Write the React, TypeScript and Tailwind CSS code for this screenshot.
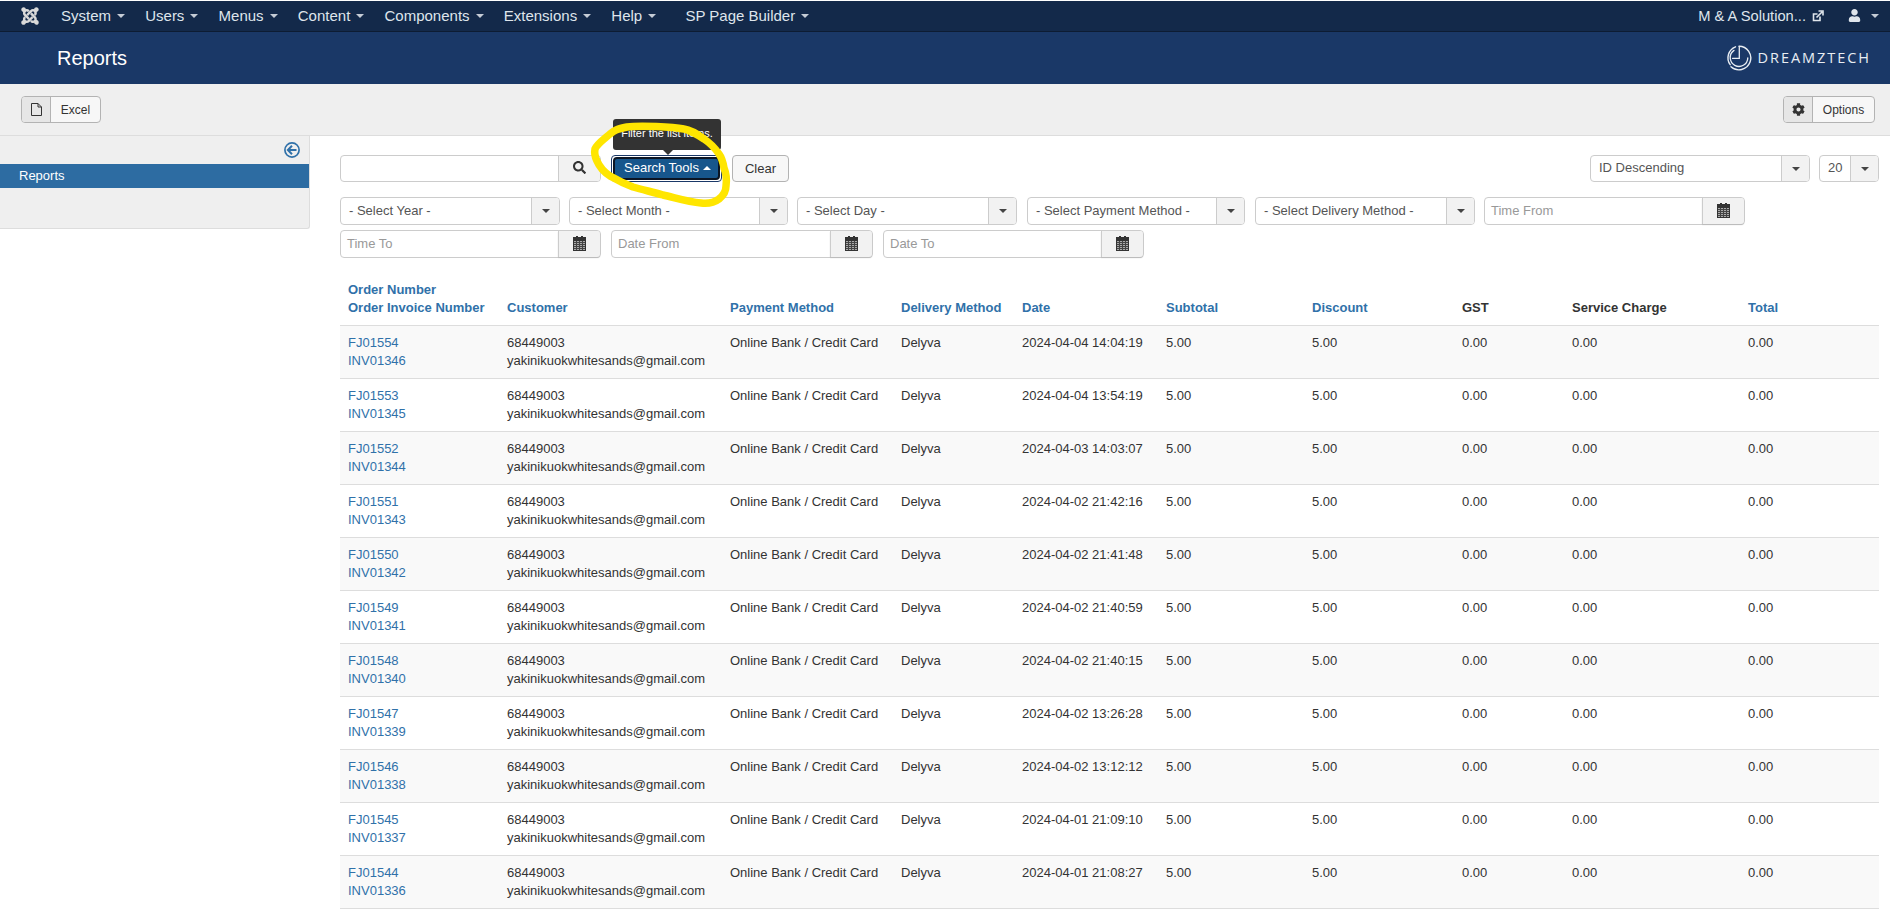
import React from "react";
import { FaJoomla, FaSearch, FaCog, FaUser } from "react-icons/fa";

const Caret = ({ up = false, className = "" }: { up?: boolean; className?: string }) => (
  <span
    className={
      (up
        ? "border-x-[4px] border-b-[4px] border-x-transparent border-b-current "
        : "border-x-[4px] border-t-[4px] border-x-transparent border-t-current ") +
      "inline-block h-0 w-0 " +
      className
    }
  />
);

const Calendar = () => (
  <svg width="13" height="15" viewBox="0 0 13 15" className="mb-[2px] mr-[1px]">
    <rect x="0" y="1" width="13" height="14" fill="#333" />
    <rect x="3" y="0" width="2" height="2" fill="#333" />
    <rect x="8" y="0" width="2" height="2" fill="#333" />
    <rect x="1" y="5" width="11" height="9" fill="#aaa" />
    {[6, 8, 10, 12].map((y) => (
      <rect key={y} x="1" y={y} width="11" height="1" fill="#444" />
    ))}
    {[3, 6, 9].map((x) => (
      <rect key={x} x={x} y="5" width="1" height="9" fill="#444" />
    ))}
  </svg>
);

const Select = ({ label, w, top = false }: { label: string; w: string; top?: boolean }) => (
  <div
    className={
      (top ? "h-[27px] " : "h-[28px] ") + "flex shrink-0 rounded-[4px] border border-[#ccc] bg-white text-[#555] " + w
    }
  >
    <div className={(top ? "leading-[24px] " : "leading-[26px] ") + "flex-1 truncate pl-[8px]"}>{label}</div>
    <div className="flex w-[28px] items-center justify-center rounded-r-[3px] border-l border-[#ccc] bg-[#f2f2f2]">
      <Caret className="text-[#444]" />
    </div>
  </div>
);

const DateInput = ({ label, w }: { label: string; w: string }) => (
  <div className={"flex h-[28px] shrink-0 rounded-[4px] border border-[#ccc] bg-white " + w}>
    <div className="flex-1 pl-[6px] leading-[26px] text-[#999]">{label}</div>
    <div className="flex w-[42px] items-center justify-center rounded-r-[3px] border-l border-[#ccc] bg-[#f2f2f2] shadow-[0_1px_1px_#bbb]">
      <Calendar />
    </div>
  </div>
);

const navItems = ["System", "Users", "Menus", "Content", "Components", "Extensions", "Help"];

const rows = [
  ["FJ01554", "INV01346", "2024-04-04 14:04:19"],
  ["FJ01553", "INV01345", "2024-04-04 13:54:19"],
  ["FJ01552", "INV01344", "2024-04-03 14:03:07"],
  ["FJ01551", "INV01343", "2024-04-02 21:42:16"],
  ["FJ01550", "INV01342", "2024-04-02 21:41:48"],
  ["FJ01549", "INV01341", "2024-04-02 21:40:59"],
  ["FJ01548", "INV01340", "2024-04-02 21:40:15"],
  ["FJ01547", "INV01339", "2024-04-02 13:26:28"],
  ["FJ01546", "INV01338", "2024-04-02 13:12:12"],
  ["FJ01545", "INV01337", "2024-04-01 21:09:10"],
  ["FJ01544", "INV01336", "2024-04-01 21:08:27"],
];

const th = "px-[8px] py-[8px] text-left align-bottom font-bold leading-[18px]";
const td = "px-[8px] py-[8px] align-top leading-[18px]";

export default function App() {
  return (
    <div className="relative h-[918px] w-full overflow-hidden bg-white pt-px font-['Liberation_Sans',Arial,sans-serif] text-[13px] text-[#333]">
      {/* Top navigation */}
      <div className="flex h-[31px] items-center border-b border-[#0d1c33] bg-[#13294a] text-[15px] text-[#dfe5ec]">
        <FaJoomla className="ml-[20px] mr-[21px] text-[20px] text-[#d9d9d9]" />
        <div className="flex items-center gap-[20.2px]">
          {navItems.map((n) => (
            <div key={n} className="flex items-center gap-[6px]">
              <span>{n}</span>
              <Caret className="text-[#c5ccd6]" />
            </div>
          ))}
          <div className="ml-[9px] flex items-center gap-[6px]">
            <span>SP Page Builder</span>
            <Caret className="text-[#c5ccd6]" />
          </div>
        </div>
        <div className="ml-auto flex items-center pr-[11px]">
          <span className="text-[14.7px]">M &amp; A Solution...</span>
          <svg width="12" height="12" viewBox="0 0 12 12" className="ml-[6px]" fill="none" stroke="#dfe5ec">
            <path d="M8 6.5V10.5H1.5V4H5.5" strokeWidth="1.6" />
            <path d="M4.5 7.5L10 2M6.5 1H11V5.5" strokeWidth="1.6" />
          </svg>
          <FaUser className="ml-[24px] text-[13px] text-[#dfe5ec]" />
          <Caret className="ml-[10px] text-[#c5ccd6]" />
        </div>
      </div>

      {/* Header */}
      <div className="flex h-[52px] items-center bg-[#1a3867] pl-[57px] pr-[19px] text-white">
        <h1 className="text-[20px] font-normal">Reports</h1>
        <div className="ml-auto flex items-center">
          <svg width="26" height="26" viewBox="0 0 26 26" fill="none" stroke="#e8edf3" strokeLinecap="round">
            <path d="M13 1.2A11.8 11.8 0 1 1 5 21.7" strokeWidth="1.4" />
            <path d="M4.2 19.7A11.8 11.8 0 0 1 9.5 1.8" strokeWidth="1.4" />
            <path d="M8 5.4A8.8 8.8 0 1 0 21.8 13" strokeWidth="1.3" />
            <path d="M13.3 1.5V13.3H6.5" strokeWidth="1.3" />
          </svg>
          <span className="ml-[6px] font-['Open_Sans',sans-serif] text-[14.5px] leading-none tracking-[1.95px] text-[#e8edf3]">
            DREAMZTECH
          </span>
        </div>
      </div>

      {/* Toolbar */}
      <div className="flex h-[52px] items-center justify-between border-b border-[#ddd] bg-[#efefef] pl-[21px] pr-[15px]">
        <div className="flex h-[27px] w-[80px] overflow-hidden rounded-[4px] border border-[#b3b3b3] bg-[#f7f7f7]">
          <div className="flex w-[29px] items-center justify-center border-r border-[#b3b3b3] bg-[#e6e6e6]">
            <svg width="11" height="13" viewBox="0 0 11 13" fill="none" stroke="#333">
              <path d="M0.5 0.5H7L10.5 4V12.5H0.5ZM7 0.5V4H10.5" strokeWidth="1" />
            </svg>
          </div>
          <div className="flex flex-1 items-center justify-center text-[12px]">Excel</div>
        </div>
        <div className="flex h-[27px] w-[92px] overflow-hidden rounded-[4px] border border-[#b3b3b3] bg-[#f7f7f7]">
          <div className="flex w-[29px] items-center justify-center border-r border-[#b3b3b3] bg-[#e6e6e6]">
            <FaCog className="text-[13px] text-[#333]" />
          </div>
          <div className="flex flex-1 items-center justify-center text-[12px]">Options</div>
        </div>
      </div>

      <div className="flex">
        {/* Sidebar */}
        <div className="h-[93px] w-[310px] shrink-0 rounded-br-[3px] border-b border-r border-[#ddd] bg-[#efefef]">
          <div className="flex h-[28px] items-center justify-end pr-[9px]">
            <svg width="16" height="16" viewBox="0 0 16 16" fill="none" stroke="#3071a9">
              <circle cx="8" cy="8" r="7.1" strokeWidth="1.7" />
              <path d="M8 3.8L3.9 8L8 12.2M4.2 8H12.5" strokeWidth="2" />
            </svg>
          </div>
          <div className="h-[24px] bg-[#2d6ca2] pl-[19px] text-[13px] leading-[24px] text-white">Reports</div>
        </div>

        {/* Content */}
        <div className="min-w-0 flex-1 pl-[30px] pr-[11px] pt-[19px]">
          <div className="flex h-[27px] items-stretch">
            <div className="flex w-[261px] rounded-[4px] border border-[#ccc] bg-white">
              <div className="flex-1" />
              <div className="flex w-[42px] items-center justify-center rounded-r-[3px] border-l border-[#ccc] bg-[#f2f2f2]">
                <FaSearch className="mb-[2px] text-[13px] text-[#333]" />
              </div>
            </div>
            <div className="relative ml-[10px] w-[111px] rounded-[4px] border border-[#1a3867] bg-white p-px">
              <div className="flex h-full items-center justify-center gap-[4px] rounded-[4px] border-2 border-[#0b1524] bg-[#17568c] pb-[1px] pl-[2px] text-white">
                <span>Search Tools</span>
                <Caret up />
              </div>
              <div className="absolute left-[1px] top-[-37px] flex h-[31px] w-[108px] justify-center rounded-[3px] bg-[#333] pt-[7px] text-[11px] leading-[14px] text-white">
                Filter the list items.
              </div>
              <span className="absolute left-[51px] top-[-6px] h-0 w-0 border-x-[5px] border-t-[5px] border-x-transparent border-t-[#333]" />
            </div>
            <div className="ml-[10px] flex w-[57px] items-center justify-center rounded-[4px] border border-[#b3b3b3] bg-[#f7f7f7] text-[#333]">
              Clear
            </div>
            <div className="ml-auto flex gap-[9px]">
              <Select top label="ID Descending" w="w-[220px]" />
              <Select top label="20" w="w-[60px]" />
            </div>
          </div>

          <div className="mt-[15px] flex">
            <Select label="- Select Year -" w="w-[220px]" />
            <Select label="- Select Month -" w="ml-[9px] w-[219px]" />
            <Select label="- Select Day -" w="ml-[9px] w-[220px]" />
            <Select label="- Select Payment Method -" w="ml-[10px] w-[218px]" />
            <Select label="- Select Delivery Method -" w="ml-[10px] w-[220px]" />
            <DateInput label="Time From" w="ml-[9px] w-[261px]" />
          </div>
          <div className="mt-[5px] flex">
            <DateInput label="Time To" w="w-[261px]" />
            <DateInput label="Date From" w="ml-[10px] w-[262px]" />
            <DateInput label="Date To" w="ml-[10px] w-[261px]" />
          </div>

          <table className="mt-[15px] w-[1539px] table-fixed border-collapse">
            <colgroup>
              <col className="w-[159px]" />
              <col className="w-[223px]" />
              <col className="w-[171px]" />
              <col className="w-[121px]" />
              <col className="w-[144px]" />
              <col className="w-[146px]" />
              <col className="w-[150px]" />
              <col className="w-[110px]" />
              <col className="w-[176px]" />
              <col className="w-[139px]" />
            </colgroup>
            <thead>
              <tr className="text-[#3071a9]">
                <th className={th}>
                  Order Number
                  <br />
                  Order Invoice Number
                </th>
                <th className={th}>Customer</th>
                <th className={th}>Payment Method</th>
                <th className={th}>Delivery Method</th>
                <th className={th}>Date</th>
                <th className={th}>Subtotal</th>
                <th className={th}>Discount</th>
                <th className={th + " text-[#333]"}>GST</th>
                <th className={th + " text-[#333]"}>Service Charge</th>
                <th className={th}>Total</th>
              </tr>
            </thead>
            <tbody>
              {rows.map((r, i) => (
                <tr key={r[0]} className={"border-y border-[#ddd] " + (i % 2 === 0 ? "bg-[#f9f9f9]" : "bg-white")}>
                  <td className={td + " text-[#3071a9]"}>
                    {r[0]}
                    <br />
                    {r[1]}
                  </td>
                  <td className={td}>
                    68449003
                    <br />
                    yakinikuokwhitesands@gmail.com
                  </td>
                  <td className={td}>Online Bank / Credit Card</td>
                  <td className={td}>Delyva</td>
                  <td className={td}>{r[2]}</td>
                  <td className={td}>5.00</td>
                  <td className={td}>5.00</td>
                  <td className={td}>0.00</td>
                  <td className={td}>0.00</td>
                  <td className={td}>0.00</td>
                </tr>
              ))}
            </tbody>
          </table>
        </div>
      </div>

      {/* Yellow freehand highlight drawn over the screenshot */}
      <svg className="pointer-events-none absolute left-0 top-0" width="1890" height="918" fill="none">
        <path
          d="M704 139C696 133 691 130 684 129C673 127 640 125 627 127C618 129 614 130 610 134C603 140 597 144 595 149C594 154 595 157 597 161C600 168 604 172 610 176C617 180 625 184 633 187C643 190 653 192 663 195C676 198 688 202 701 203C709 204 715 202 719 199C724 195 726 191 726 186C727 179 726 173 724 168C723 162 722 158 719 154C715 148 710 143 704 139C696 134 691 131 684 129"
          stroke="#ffe600"
          strokeWidth="7.5"
          strokeLinecap="round"
        />
      </svg>
    </div>
  );
}
